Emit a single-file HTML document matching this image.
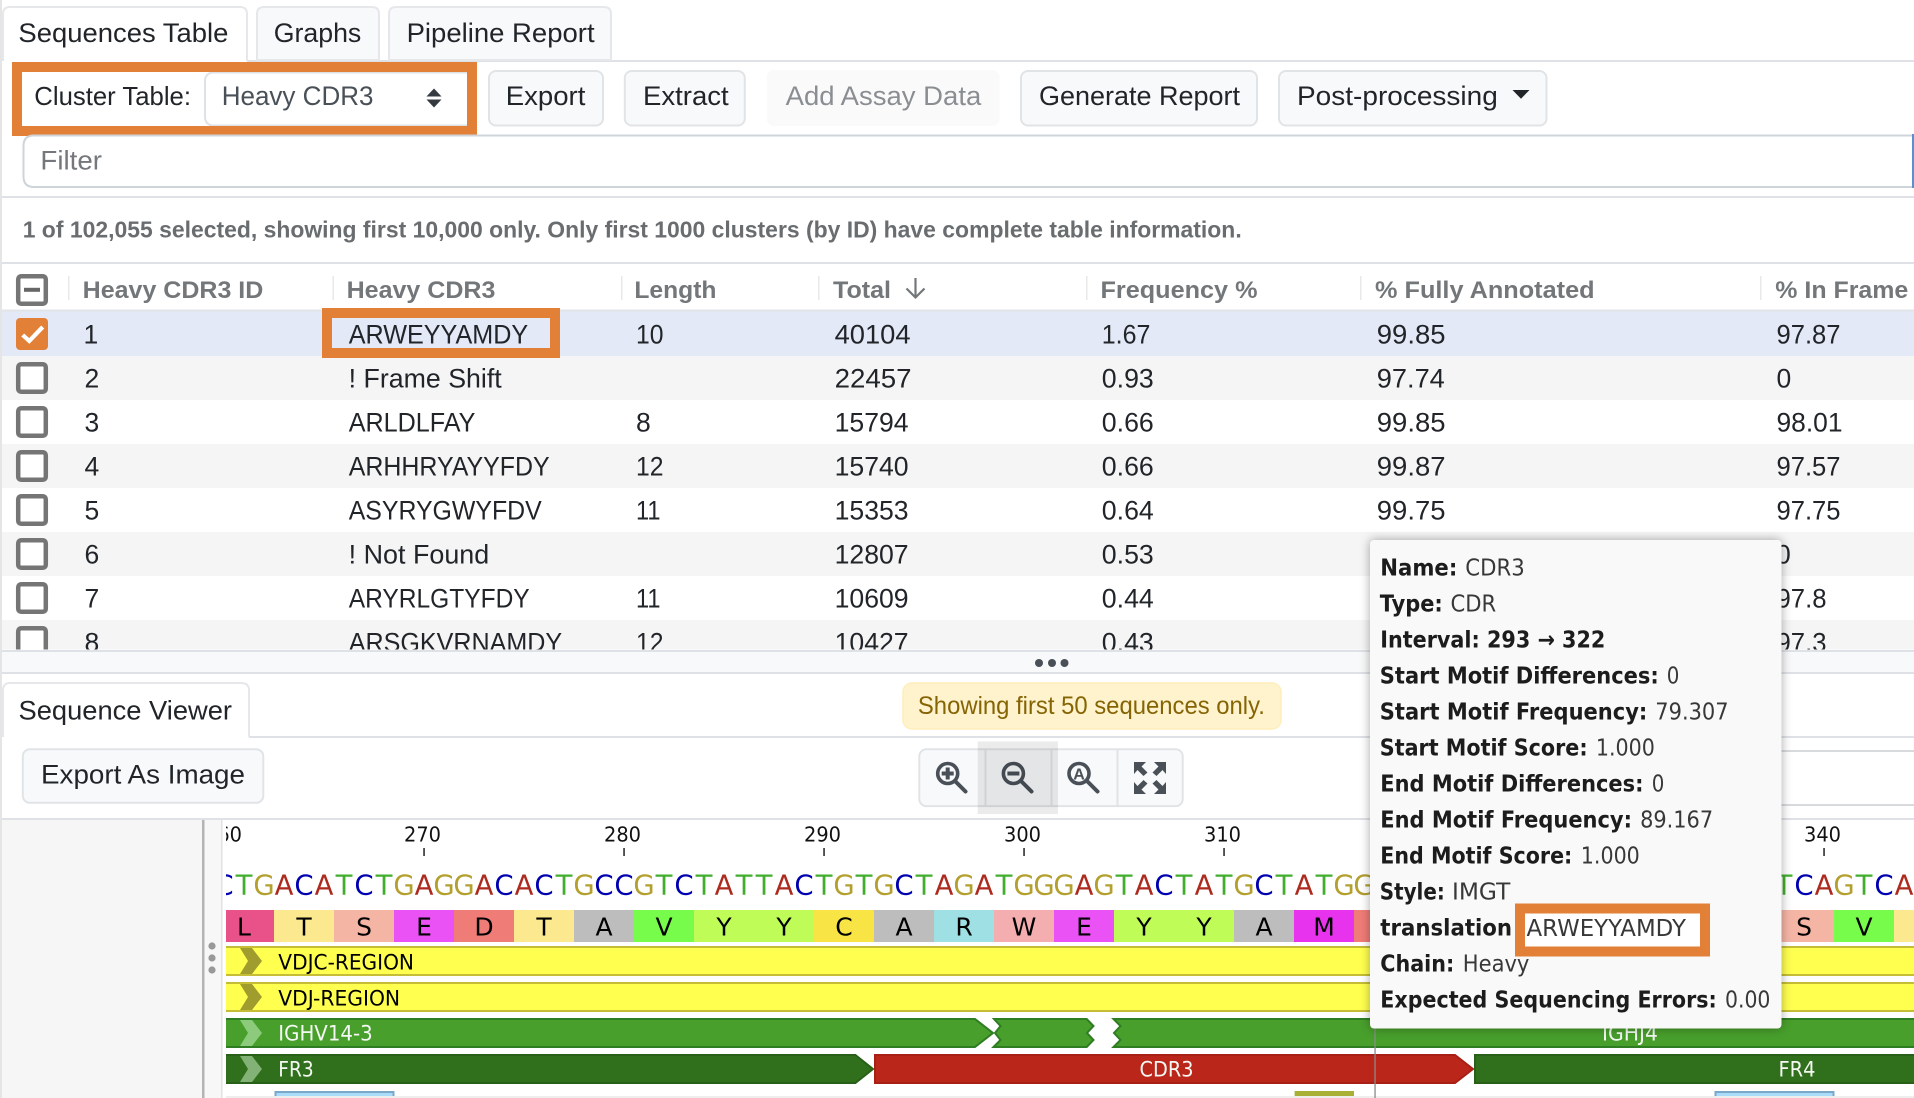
<!DOCTYPE html>
<html><head><meta charset="utf-8"><title>Sequences Table</title>
<style>
html,body{margin:0;padding:0;background:#fff;width:1914px;height:1098px;overflow:hidden}
svg{display:block}
text{font-family:"Liberation Sans",sans-serif;fill:#212529;font-size:27px}
.h{font-weight:700;font-size:24.5px;fill:#74777a}
.r{font-size:26.5px;fill:#212529}
.t{font-family:"DejaVu Sans",sans-serif;font-size:23.2px;fill:#383838}
.tb{font-family:"DejaVu Sans",sans-serif;font-size:23.2px;font-weight:700;fill:#1c1c1c}
.lab{font-family:"DejaVu Sans",sans-serif;font-size:20.5px;fill:#111}
.n{font-family:"DejaVu Sans",sans-serif;font-size:27.5px;text-anchor:middle}
.aa{font-family:"DejaVu Sans",sans-serif;font-size:25px;fill:#000;text-anchor:middle}
.f{font-family:"DejaVu Sans",sans-serif;font-size:21.5px;fill:#000}
.fw{font-family:"DejaVu Sans",sans-serif;font-size:21.5px;fill:#f4f8f2}
.btn{fill:#f8f9fa;stroke:#e1e4e7;stroke-width:2}
.cb{fill:#fff;stroke:#757575;stroke-width:4.5}
</style></head><body>
<svg width="1914" height="1098" viewBox="0 0 1914 1098" xmlns="http://www.w3.org/2000/svg">
<defs>
<clipPath id="tbl"><rect x="0" y="311" width="1914" height="338.5"/></clipPath>
<clipPath id="cv"><rect x="226" y="820" width="1688" height="278"/></clipPath>
</defs>
<rect width="1914" height="1098" fill="#fff"/>
<rect x="0" y="0" width="2" height="1098" fill="#e5e5e5"/>

<!-- top tabs -->
<rect x="247" y="60" width="1667" height="2" fill="#dee2e6"/>
<path d="M3 61V14Q3 7 10 7H240Q247 7 247 14V61" fill="#fff" stroke="#e5e7ea" stroke-width="2"/>
<path d="M257 60V14Q257 7 264 7H372Q379 7 379 14V60Z" fill="#f8f9fa" stroke="#e5e7ea" stroke-width="2"/>
<path d="M389 60V14Q389 7 396 7H604Q611 7 611 14V60Z" fill="#f8f9fa" stroke="#e5e7ea" stroke-width="2"/>
<text x="18.4" y="42" textLength="210" lengthAdjust="spacingAndGlyphs">Sequences Table</text>
<text x="273.7" y="42" textLength="87.6" lengthAdjust="spacingAndGlyphs">Graphs</text>
<text x="406.6" y="42" textLength="188" lengthAdjust="spacingAndGlyphs">Pipeline Report</text>

<!-- toolbar -->
<rect x="205" y="72.5" width="269" height="53" rx="8" fill="#fff" stroke="#dee2e6" stroke-width="2"/>
<text x="34.3" y="105" textLength="156.7" lengthAdjust="spacingAndGlyphs" style="font-size:26px">Cluster Table:</text>
<text x="221.7" y="105" textLength="151.8" lengthAdjust="spacingAndGlyphs" style="fill:#495057">Heavy CDR3</text>
<path d="M434 88.5L441.5 96.5H426.5ZM434 107.5L441.5 99.5H426.5Z" fill="#343a40"/>
<rect x="17" y="67" width="455" height="64" fill="none" stroke="#e38037" stroke-width="10"/>

<rect x="489" y="71" width="114" height="54.5" rx="7" class="btn"/>
<text x="505.8" y="105" textLength="79.6" lengthAdjust="spacingAndGlyphs">Export</text>
<rect x="624.8" y="71" width="120" height="54.5" rx="7" class="btn"/>
<text x="643" y="105" textLength="85.7" lengthAdjust="spacingAndGlyphs">Extract</text>
<rect x="766.7" y="70" width="232.8" height="56" rx="7" fill="#fafafa"/>
<text x="785.6" y="105" textLength="195.7" lengthAdjust="spacingAndGlyphs" style="fill:#8a8e92">Add Assay Data</text>
<rect x="1021" y="71" width="236" height="54.5" rx="7" class="btn"/>
<text x="1039" y="105" textLength="201" lengthAdjust="spacingAndGlyphs">Generate Report</text>
<rect x="1279" y="71" width="267.5" height="54.5" rx="7" class="btn"/>
<text x="1297" y="105" textLength="200.8" lengthAdjust="spacingAndGlyphs">Post-processing</text>
<path d="M1512.5 90H1529.5L1521 98.7Z" fill="#212529"/>

<!-- filter -->
<path d="M1914 135.5H34Q23.5 135.5 23.5 146V176.5Q23.5 187 34 187H1914" fill="#fff" stroke="#ced4da" stroke-width="2"/>
<rect x="1912" y="134" width="2" height="54" fill="#5c8fd0"/>
<text x="40.4" y="169.5" textLength="61.6" lengthAdjust="spacingAndGlyphs" style="fill:#74787c">Filter</text>
<rect x="2" y="196" width="1912" height="2" fill="#dee2e6"/>

<text x="22.7" y="237.5" textLength="1219" lengthAdjust="spacingAndGlyphs" style="font-size:23.5px;font-weight:700;fill:#6a6d70">1 of 102,055 selected, showing first 10,000 only. Only first 1000 clusters (by ID) have complete table information.</text>
<rect x="2" y="262" width="1912" height="2" fill="#dee2e6"/>

<!-- header -->
<rect x="2" y="309.5" width="1912" height="2" fill="#e2e4e7"/>
<g fill="#e8e8e8">
<rect x="68" y="276" width="1.5" height="24"/><rect x="332.5" y="276" width="1.5" height="24"/><rect x="621" y="276" width="1.5" height="24"/><rect x="818" y="276" width="1.5" height="24"/><rect x="1086" y="276" width="1.5" height="24"/><rect x="1360" y="276" width="1.5" height="24"/><rect x="1760" y="276" width="1.5" height="24"/>
</g>
<rect x="18.2" y="276.2" width="27.6" height="27.6" rx="3" class="cb"/>
<rect x="24" y="287.8" width="16" height="4" fill="#666"/>
<text class="h" x="82.7" y="298" textLength="180.6" lengthAdjust="spacingAndGlyphs">Heavy CDR3 ID</text>
<text class="h" x="346.6" y="298" textLength="148.8" lengthAdjust="spacingAndGlyphs">Heavy CDR3</text>
<text class="h" x="634.4" y="298" textLength="82.1" lengthAdjust="spacingAndGlyphs">Length</text>
<text class="h" x="833" y="298" textLength="58" lengthAdjust="spacingAndGlyphs">Total</text>
<path d="M915.5 278V297M906.5 288.5L915.5 297.5L924.5 288.5" fill="none" stroke="#74777a" stroke-width="2.2"/>
<text class="h" x="1100.5" y="298" textLength="157" lengthAdjust="spacingAndGlyphs">Frequency %</text>
<text class="h" x="1375" y="298" textLength="219.6" lengthAdjust="spacingAndGlyphs">% Fully Annotated</text>
<text class="h" x="1775.3" y="298" textLength="133" lengthAdjust="spacingAndGlyphs">% In Frame</text>

<!-- rows -->
<g clip-path="url(#tbl)">
<rect x="2" y="311.5" width="1912" height="44.5" fill="#e3e9f6"/>
<rect x="2" y="356" width="1912" height="44" fill="#f5f5f5"/>
<rect x="2" y="444" width="1912" height="44" fill="#f5f5f5"/>
<rect x="2" y="532" width="1912" height="44" fill="#f5f5f5"/>
<rect x="2" y="620" width="1912" height="44" fill="#f5f5f5"/>

<rect x="16" y="318" width="32" height="32" rx="4" fill="#e38037"/>
<path d="M22.7 335L29.3 341L42.7 327" fill="none" stroke="#fff" stroke-width="4.2"/>
<rect x="18.2" y="364.2" width="27.6" height="27.6" rx="3" class="cb"/>
<rect x="18.2" y="408.2" width="27.6" height="27.6" rx="3" class="cb"/>
<rect x="18.2" y="452.2" width="27.6" height="27.6" rx="3" class="cb"/>
<rect x="18.2" y="496.2" width="27.6" height="27.6" rx="3" class="cb"/>
<rect x="18.2" y="540.2" width="27.6" height="27.6" rx="3" class="cb"/>
<rect x="18.2" y="584.2" width="27.6" height="27.6" rx="3" class="cb"/>
<rect x="18.2" y="628.2" width="27.6" height="27.6" rx="3" class="cb"/>

<text class="r" x="83.5" y="343.3">1</text><text class="r" x="84.5" y="387.3">2</text><text class="r" x="84.5" y="431.3">3</text><text class="r" x="84.5" y="475.3">4</text><text class="r" x="84.5" y="519.3">5</text><text class="r" x="84.5" y="563.3">6</text><text class="r" x="84.5" y="607.3">7</text><text class="r" x="84.5" y="651.3">8</text>

<text class="r" x="348.7" y="343.3" textLength="179.5" lengthAdjust="spacingAndGlyphs">ARWEYYAMDY</text>
<text class="r" x="348.7" y="387.3" textLength="153" lengthAdjust="spacingAndGlyphs">! Frame Shift</text>
<text class="r" x="348.7" y="431.3" textLength="126.7" lengthAdjust="spacingAndGlyphs">ARLDLFAY</text>
<text class="r" x="348.7" y="475.3" textLength="201" lengthAdjust="spacingAndGlyphs">ARHHRYAYYFDY</text>
<text class="r" x="348.7" y="519.3" textLength="193" lengthAdjust="spacingAndGlyphs">ASYRYGWYFDV</text>
<text class="r" x="348.7" y="563.3" textLength="140.5" lengthAdjust="spacingAndGlyphs">! Not Found</text>
<text class="r" x="348.7" y="607.3" textLength="181" lengthAdjust="spacingAndGlyphs">ARYRLGTYFDY</text>
<text class="r" x="348.7" y="651.3" textLength="213.5" lengthAdjust="spacingAndGlyphs">ARSGKVRNAMDY</text>

<text class="r" x="636" y="343.3" textLength="27.5" lengthAdjust="spacingAndGlyphs">10</text>
<text class="r" x="636" y="431.3">8</text>
<text class="r" x="636" y="475.3" textLength="27.5" lengthAdjust="spacingAndGlyphs">12</text>
<text class="r" x="636" y="519.3" textLength="24.5" lengthAdjust="spacingAndGlyphs">11</text>
<text class="r" x="636" y="607.3" textLength="24.5" lengthAdjust="spacingAndGlyphs">11</text>
<text class="r" x="636" y="651.3" textLength="27.5" lengthAdjust="spacingAndGlyphs">12</text>

<text class="r" x="834.6" y="343.3" textLength="76" lengthAdjust="spacingAndGlyphs">40104</text>
<text class="r" x="834.6" y="387.3" textLength="77" lengthAdjust="spacingAndGlyphs">22457</text>
<text class="r" x="834.6" y="431.3" textLength="74" lengthAdjust="spacingAndGlyphs">15794</text>
<text class="r" x="834.6" y="475.3" textLength="74" lengthAdjust="spacingAndGlyphs">15740</text>
<text class="r" x="834.6" y="519.3" textLength="74" lengthAdjust="spacingAndGlyphs">15353</text>
<text class="r" x="834.6" y="563.3" textLength="74" lengthAdjust="spacingAndGlyphs">12807</text>
<text class="r" x="834.6" y="607.3" textLength="74" lengthAdjust="spacingAndGlyphs">10609</text>
<text class="r" x="834.6" y="651.3" textLength="74" lengthAdjust="spacingAndGlyphs">10427</text>

<text class="r" x="1101.8" y="343.3" textLength="48.6" lengthAdjust="spacingAndGlyphs">1.67</text>
<text class="r" x="1101.8" y="387.3" textLength="52" lengthAdjust="spacingAndGlyphs">0.93</text>
<text class="r" x="1101.8" y="431.3" textLength="52" lengthAdjust="spacingAndGlyphs">0.66</text>
<text class="r" x="1101.8" y="475.3" textLength="52" lengthAdjust="spacingAndGlyphs">0.66</text>
<text class="r" x="1101.8" y="519.3" textLength="52" lengthAdjust="spacingAndGlyphs">0.64</text>
<text class="r" x="1101.8" y="563.3" textLength="52" lengthAdjust="spacingAndGlyphs">0.53</text>
<text class="r" x="1101.8" y="607.3" textLength="52" lengthAdjust="spacingAndGlyphs">0.44</text>
<text class="r" x="1101.8" y="651.3" textLength="52" lengthAdjust="spacingAndGlyphs">0.43</text>

<text class="r" x="1376.8" y="343.3" textLength="68.7" lengthAdjust="spacingAndGlyphs">99.85</text>
<text class="r" x="1376.8" y="387.3" textLength="68" lengthAdjust="spacingAndGlyphs">97.74</text>
<text class="r" x="1376.8" y="431.3" textLength="68.7" lengthAdjust="spacingAndGlyphs">99.85</text>
<text class="r" x="1376.8" y="475.3" textLength="68.7" lengthAdjust="spacingAndGlyphs">99.87</text>
<text class="r" x="1376.8" y="519.3" textLength="68.7" lengthAdjust="spacingAndGlyphs">99.75</text>

<text class="r" x="1776.5" y="343.3" textLength="64" lengthAdjust="spacingAndGlyphs">97.87</text>
<text class="r" x="1776.5" y="387.3">0</text>
<text class="r" x="1776.5" y="431.3" textLength="66" lengthAdjust="spacingAndGlyphs">98.01</text>
<text class="r" x="1776.5" y="475.3" textLength="64" lengthAdjust="spacingAndGlyphs">97.57</text>
<text class="r" x="1776.5" y="519.3" textLength="64" lengthAdjust="spacingAndGlyphs">97.75</text>
<text class="r" x="1776" y="563.3">0</text>
<text class="r" x="1776.5" y="607.3" textLength="50" lengthAdjust="spacingAndGlyphs">97.8</text>
<text class="r" x="1776.5" y="651.3" textLength="50" lengthAdjust="spacingAndGlyphs">97.3</text>
</g>
<rect x="327" y="313" width="228" height="40" fill="none" stroke="#e38037" stroke-width="10"/>

<!-- resizer -->
<rect x="2" y="651.5" width="1912" height="21" fill="#f8f9fa"/>
<rect x="2" y="650" width="1912" height="2" fill="#dee2e6"/>
<rect x="2" y="672" width="1912" height="2" fill="#dee2e6"/>
<circle cx="1039" cy="663" r="4" fill="#495057"/><circle cx="1052" cy="663" r="4" fill="#495057"/><circle cx="1064.5" cy="663" r="4" fill="#495057"/>

<!-- viewer header -->
<rect x="249" y="736" width="1665" height="2" fill="#dee2e6"/>
<path d="M3 737V690Q3 683 10 683H241Q249 683 249 690V737" fill="#fff" stroke="#e5e7ea" stroke-width="2"/>
<text x="18.5" y="719.3" textLength="213.5" lengthAdjust="spacingAndGlyphs">Sequence Viewer</text>
<rect x="903" y="683" width="378" height="46" rx="9" fill="#fff3cd" stroke="#ffeeba" stroke-width="1.5"/>
<text x="917.9" y="714" textLength="347" lengthAdjust="spacingAndGlyphs" style="font-size:25px;fill:#856404">Showing first 50 sequences only.</text>

<rect x="22.8" y="749.3" width="240.5" height="53.5" rx="7" class="btn"/>
<text x="41" y="783.3" textLength="204" lengthAdjust="spacingAndGlyphs">Export As Image</text>

<!-- right hidden toolbar lines -->
<rect x="1375" y="750" width="539" height="2" fill="#d8dbde"/>
<rect x="1375" y="804" width="539" height="2" fill="#d8dbde"/>

<!-- zoom group -->
<rect x="919.3" y="749.3" width="263.4" height="56.8" rx="7" class="btn"/>
<rect x="984.5" y="749" width="2" height="57.5" fill="#e1e4e7"/>
<rect x="1050.5" y="749" width="2" height="57.5" fill="#e1e4e7"/>
<rect x="1116.5" y="749" width="2" height="57.5" fill="#e1e4e7"/>
<g fill="none" stroke="#495057" stroke-width="3.6">
<circle cx="947.7" cy="773.5" r="10"/><path d="M955 781L965.5 791.5" stroke-width="4" stroke-linecap="round"/>
<circle cx="1013.4" cy="773.5" r="10"/><path d="M1021 781L1031.5 791.5" stroke-width="4" stroke-linecap="round"/>
<circle cx="1079" cy="773.5" r="10"/><path d="M1087 781L1097.5 791.5" stroke-width="4" stroke-linecap="round"/>
</g>
<path d="M941.7 773.5H953.7M947.7 767.5V779.5" stroke="#495057" stroke-width="4" fill="none"/>
<path d="M1007.4 773.5H1019.4" stroke="#495057" stroke-width="4" fill="none"/>
<text x="1079" y="779.5" text-anchor="middle" style="font-size:16px;font-weight:700;fill:#495057">A</text>
<g fill="#495057">
<path d="M1134 762H1146L1141.5 766.5L1147.5 772.5L1143.5 776L1137.5 770L1134 774Z"/>
<path d="M1166 762H1154L1158.5 766.5L1152.5 772.5L1156.5 776L1162.5 770L1166 774Z"/>
<path d="M1134 794H1146L1141.5 789.5L1147.5 783.5L1143.5 780L1137.5 786L1134 782Z"/>
<path d="M1166 794H1154L1158.5 789.5L1152.5 783.5L1156.5 780L1162.5 786L1166 782Z"/>
</g>
<rect x="977.7" y="741.5" width="80.3" height="72.5" fill="#000" fill-opacity=".08"/>
<rect x="2" y="818" width="1912" height="2" fill="#dee2e6"/>

<!-- left gutter -->
<rect x="2" y="820" width="201" height="278" fill="#f6f6f6"/>
<rect x="202" y="820" width="2.5" height="278" fill="#b4b4b4"/>
<rect x="204.5" y="820" width="17" height="278" fill="#f7f7f7"/>
<rect x="221" y="820" width="1.5" height="278" fill="#e2e2e2"/>
<circle cx="212" cy="946" r="3.6" fill="#999"/><circle cx="212" cy="958" r="3.6" fill="#999"/><circle cx="212" cy="970" r="3.6" fill="#999"/>

<!-- canvas -->
<g clip-path="url(#cv)">
<text class="lab" x="223.5" y="841.7" text-anchor="middle" textLength="37" lengthAdjust="spacingAndGlyphs">260</text>
<text class="lab" x="404" y="841.7" textLength="37" lengthAdjust="spacingAndGlyphs">270</text>
<text class="lab" x="604" y="841.7" textLength="37" lengthAdjust="spacingAndGlyphs">280</text>
<text class="lab" x="804" y="841.7" textLength="37" lengthAdjust="spacingAndGlyphs">290</text>
<text class="lab" x="1004" y="841.7" textLength="37" lengthAdjust="spacingAndGlyphs">300</text>
<text class="lab" x="1204" y="841.7" textLength="37" lengthAdjust="spacingAndGlyphs">310</text>
<text class="lab" x="1804" y="841.7" textLength="37" lengthAdjust="spacingAndGlyphs">340</text>
<g fill="#222"><rect x="423.3" y="848" width="1.5" height="8"/><rect x="623.3" y="848" width="1.5" height="8"/><rect x="823.3" y="848" width="1.5" height="8"/><rect x="1023.3" y="848" width="1.5" height="8"/><rect x="1223.3" y="848" width="1.5" height="8"/><rect x="1823.3" y="848" width="1.5" height="8"/></g>

<text class="n" style="fill:#0000b0" y="894.3" x="224 304 364 504 544 604 624 684 804 904 1164 1264 1804 1884">CCCCCCCCCCCCCC</text>
<text class="n" style="fill:#41ae2d" y="894.3" x="244 344 384 564 664 704 744 764 824 864 924 1004 1124 1184 1224 1284 1324 1784 1864">TTTTTTTTTTTTTTTTTTT</text>
<text class="n" style="fill:#b3a02f" y="894.3" x="264 404 444 464 584 644 844 884 964 1024 1044 1064 1104 1244 1344 1364 1844">GGGGGGGGGGGGGGGGG</text>
<text class="n" style="fill:#ad2a1e" y="894.3" x="284 324 424 484 524 724 784 944 984 1084 1144 1204 1304 1824 1904">AAAAAAAAAAAAAAA</text>

<!-- amino acids -->
<rect x="226" y="910" width="48" height="32" fill="#e95288"/>
<rect x="274" y="910" width="60" height="32" fill="#fbe88f"/>
<rect x="334" y="910" width="60" height="32" fill="#f5b5a5"/>
<rect x="394" y="910" width="60" height="32" fill="#ea52f5"/>
<rect x="454" y="910" width="60" height="32" fill="#ef7c77"/>
<rect x="514" y="910" width="60" height="32" fill="#fbe88f"/>
<rect x="574" y="910" width="60" height="32" fill="#bdbdbd"/>
<rect x="634" y="910" width="60" height="32" fill="#78fc4c"/>
<rect x="694" y="910" width="120" height="32" fill="#c0fc58"/>
<rect x="814" y="910" width="60" height="32" fill="#f8e545"/>
<rect x="874" y="910" width="60" height="32" fill="#bdbdbd"/>
<rect x="934" y="910" width="60" height="32" fill="#9ee0e3"/>
<rect x="994" y="910" width="60" height="32" fill="#f4aeb0"/>
<rect x="1054" y="910" width="60" height="32" fill="#ea52f5"/>
<rect x="1114" y="910" width="120" height="32" fill="#c0fc58"/>
<rect x="1234" y="910" width="60" height="32" fill="#bdbdbd"/>
<rect x="1294" y="910" width="60" height="32" fill="#e833ee"/>
<rect x="1354" y="910" width="60" height="32" fill="#ef7c77"/>
<rect x="1774" y="910" width="60" height="32" fill="#f5b5a5"/>
<rect x="1834" y="910" width="60" height="32" fill="#78fc4c"/>
<rect x="1894" y="910" width="20" height="32" fill="#fbe88f"/>
<text class="aa" y="935.3" x="244 304 364 424 484 544 604 664 724 784 844 904 964 1024 1084 1144 1204 1264 1324 1804 1864">LTSEDTAVYYCARWEYYAMSV</text>

<!-- features -->
<rect x="220" y="947" width="1710" height="28" fill="#ffff50" stroke="#c4bd35" stroke-width="2"/>
<rect x="220" y="983" width="1710" height="28" fill="#ffff50" stroke="#c4bd35" stroke-width="2"/>
<path d="M240 948H252L262 961L252 974H240L248 961Z" fill="#a09c2e"/>
<path d="M240 984H252L262 997L252 1010H240L248 997Z" fill="#a09c2e"/>
<text class="f" x="278.3" y="969.3" textLength="135.7" lengthAdjust="spacingAndGlyphs">VDJC-REGION</text>
<text class="f" x="278.3" y="1005.3" textLength="121.8" lengthAdjust="spacingAndGlyphs">VDJ-REGION</text>

<g fill="#489f2c" stroke="#2f7d22" stroke-width="2">
<path d="M220 1019H975L993 1033L975 1047H220Z"/>
<path d="M994 1019H1086.7L1093.5 1026L1087 1033L1093.5 1040L1086.7 1047H993.5L1000.5 1040L995 1033L1000.5 1026Z"/>
<path d="M1113.5 1019H1920V1047H1113.5L1120.5 1040L1114 1033L1120.5 1026Z"/>
</g>
<path d="M240 1020H252L262 1033L252 1046H240L248 1033Z" fill="#8ccb7c"/>
<text class="fw" x="278.3" y="1040.6" textLength="94.4" lengthAdjust="spacingAndGlyphs">IGHV14-3</text>
<text class="fw" x="1630" y="1040.6" text-anchor="middle" textLength="56" lengthAdjust="spacingAndGlyphs">IGHJ4</text>

<path d="M220 1055H855.4L873 1069L855.4 1083H220Z" fill="#30701c" stroke="#28601a" stroke-width="2"/>
<path d="M875 1055H1455L1473 1069L1455 1083H875Z" fill="#bb261a" stroke="#a82015" stroke-width="2"/>
<path d="M1475 1055H1920V1083H1475Z" fill="#30701c" stroke="#28601a" stroke-width="2"/>
<path d="M240 1056H252L262 1069L252 1082H240L248 1069Z" fill="#82b275"/>
<text class="fw" x="278.3" y="1076.6" textLength="35.4" lengthAdjust="spacingAndGlyphs">FR3</text>
<text class="fw" x="1166.5" y="1076.6" text-anchor="middle" textLength="54" lengthAdjust="spacingAndGlyphs">CDR3</text>
<text class="fw" x="1797" y="1076.6" text-anchor="middle" textLength="37" lengthAdjust="spacingAndGlyphs">FR4</text>

<rect x="275.5" y="1092" width="118" height="10" fill="#a8dcf8" stroke="#7aa8c8" stroke-width="2"/>
<rect x="1715.5" y="1092" width="118" height="10" fill="#a8dcf8" stroke="#7aa8c8" stroke-width="2"/>
<rect x="1294.6" y="1091" width="59.4" height="7" fill="#a8b035"/>
<rect x="226" y="1096" width="1688" height="2" fill="#eee"/>
<rect x="1374.4" y="1028" width="1.3" height="70" fill="#8a8a8a"/>
</g>

<!-- tooltip -->
<rect x="1370" y="540" width="411.5" height="488.5" rx="4" fill="#f9f9f9" style="filter:drop-shadow(0 0 5px rgba(0,0,0,.35))"/>
<text class="tb" x="1380.3" y="575.4" textLength="77" lengthAdjust="spacingAndGlyphs">Name:</text><text class="t" x="1465.3" y="575.4" textLength="59.4" lengthAdjust="spacingAndGlyphs">CDR3</text>
<text class="tb" x="1379.8" y="611.4" textLength="63" lengthAdjust="spacingAndGlyphs">Type:</text><text class="t" x="1450.5" y="611.4" textLength="45.7" lengthAdjust="spacingAndGlyphs">CDR</text>
<text class="tb" x="1380.3" y="647.5" textLength="225" lengthAdjust="spacingAndGlyphs">Interval: 293 → 322</text>
<text class="tb" x="1379.8" y="683.5" textLength="279" lengthAdjust="spacingAndGlyphs">Start Motif Differences:</text><text class="t" x="1666.8" y="683.5" textLength="12.6" lengthAdjust="spacingAndGlyphs">0</text>
<text class="tb" x="1379.8" y="719.5" textLength="267.5" lengthAdjust="spacingAndGlyphs">Start Motif Frequency:</text><text class="t" x="1655.3" y="719.5" textLength="73.3" lengthAdjust="spacingAndGlyphs">79.307</text>
<text class="tb" x="1379.8" y="755.5" textLength="207.8" lengthAdjust="spacingAndGlyphs">Start Motif Score:</text><text class="t" x="1595.9" y="755.5" textLength="59" lengthAdjust="spacingAndGlyphs">1.000</text>
<text class="tb" x="1380.3" y="791.5" textLength="263.2" lengthAdjust="spacingAndGlyphs">End Motif Differences:</text><text class="t" x="1651.7" y="791.5" textLength="12.6" lengthAdjust="spacingAndGlyphs">0</text>
<text class="tb" x="1380.3" y="827.5" textLength="251.7" lengthAdjust="spacingAndGlyphs">End Motif Frequency:</text><text class="t" x="1640.1" y="827.5" textLength="73" lengthAdjust="spacingAndGlyphs">89.167</text>
<text class="tb" x="1380.3" y="863.5" textLength="192" lengthAdjust="spacingAndGlyphs">End Motif Score:</text><text class="t" x="1580.8" y="863.5" textLength="59" lengthAdjust="spacingAndGlyphs">1.000</text>
<text class="tb" x="1379.8" y="899.5" textLength="65" lengthAdjust="spacingAndGlyphs">Style:</text><text class="t" x="1452" y="899.5" textLength="58.3" lengthAdjust="spacingAndGlyphs">IMGT</text>
<text class="tb" x="1380.3" y="935.5" textLength="131.8" lengthAdjust="spacingAndGlyphs">translation</text>
<text class="tb" x="1380.3" y="971.4" textLength="74" lengthAdjust="spacingAndGlyphs">Chain:</text><text class="t" x="1462.8" y="971.4" textLength="66.6" lengthAdjust="spacingAndGlyphs">Heavy</text>
<text class="tb" x="1380.3" y="1007.4" textLength="336.5" lengthAdjust="spacingAndGlyphs">Expected Sequencing Errors:</text><text class="t" x="1725" y="1007.4" textLength="45.4" lengthAdjust="spacingAndGlyphs">0.00</text>
<rect x="1520" y="908.5" width="185" height="43" fill="#fff" stroke="#e38037" stroke-width="10"/>
<text class="t" x="1526.5" y="936" textLength="159.5" lengthAdjust="spacingAndGlyphs">ARWEYYAMDY</text>
</svg>
</body></html>
